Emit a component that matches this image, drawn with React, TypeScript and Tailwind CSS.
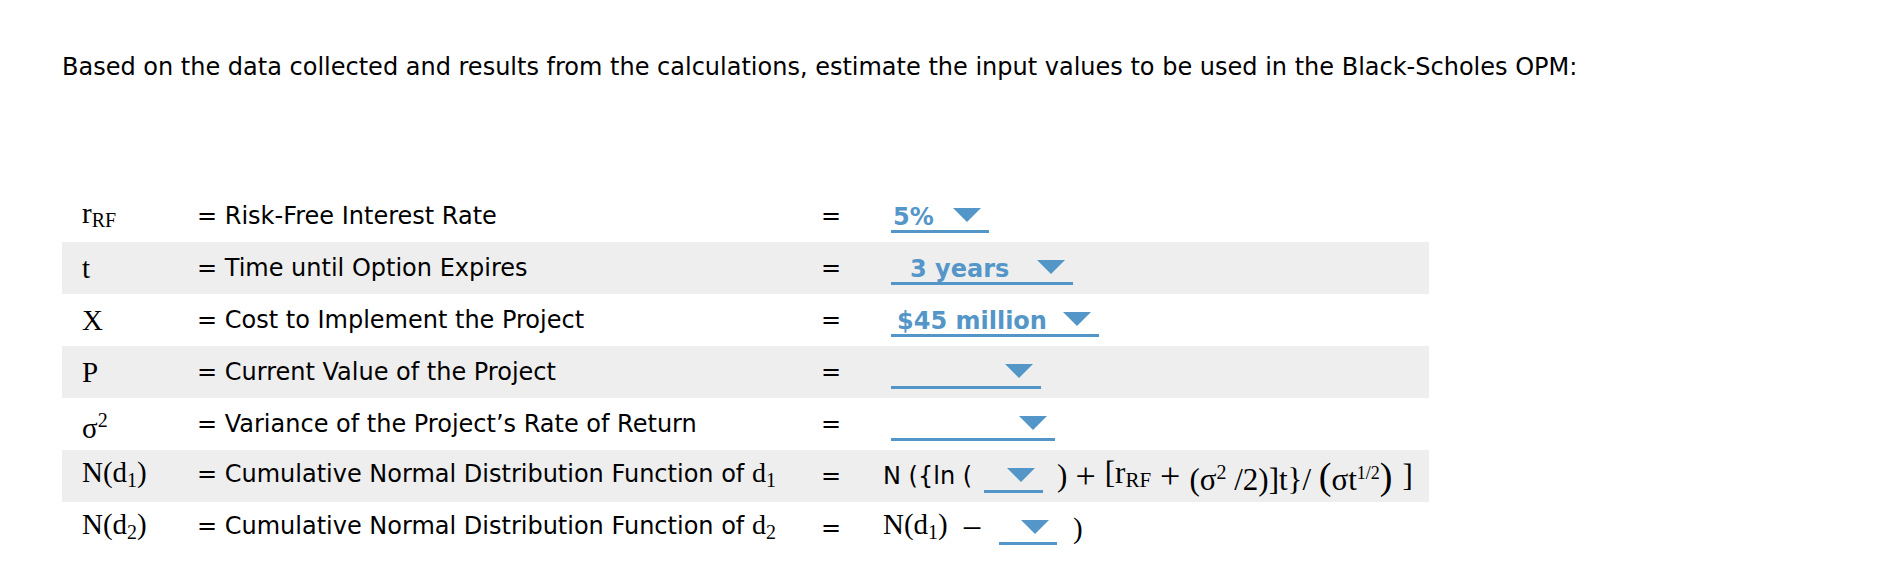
import type { ReactNode } from 'react';

const BLUE = '#5596c8';

const Triangle = () => (
  <svg width="28" height="14" viewBox="0 0 28 14" className="mt-[1px] shrink-0">
    <polygon points="0,0 28,0 14,14" fill={BLUE} />
  </svg>
);

type DropProps = { value?: string; className: string };

// blue underlined select with the caret on the right
const Dropdown = ({ value, className }: DropProps) => (
  <span
    className={`mt-[8px] flex h-[26px] shrink-0 items-start justify-between border-b-[3px] border-[#5596c8] pr-[8px] ${className}`}
  >
    <span className="text-[24px] font-bold leading-[20px] text-[#5596c8]">{value}</span>
    <Triangle />
  </span>
);

type RowProps = { gray?: boolean; name: ReactNode; desc: ReactNode; children: ReactNode };

const Row = ({ gray, name, desc, children }: RowProps) => (
  <div className={`flex h-[52px] items-center pl-[20px] ${gray ? 'bg-[#eeeeee]' : ''}`}>
    <div className="w-[115px] font-['Liberation_Serif',serif] text-[29px] leading-[30px]">{name}</div>
    <div className="w-[624px] text-[24px] leading-[28px]">{desc}</div>
    <div className="w-[62px] text-[24px] leading-[28px]">=</div>
    <div className="flex items-center">{children}</div>
  </div>
);

const Serif = ({ children }: { children: ReactNode }) => (
  <span className="font-['Liberation_Serif',serif]">{children}</span>
);

export default function App() {
  return (
    <div className="h-[582px] w-[1896px] bg-white pl-[62px] pt-[53px] font-['DejaVu_Sans',sans-serif] text-black">
      <p className="text-[24px] leading-[28px]">
        Based on the data collected and results from the calculations, estimate the input values to be used in the
        Black-Scholes OPM:
      </p>

      <div className="mt-[109px] w-[1367px]">
        <Row
          name={
            <>
              r<span className="align-[-4px] text-[20px]">RF</span>
            </>
          }
          desc="= Risk-Free Interest Rate"
        >
          <Dropdown value="5%" className="ml-[8px] w-[98px] pl-[2px]" />
        </Row>

        <Row gray name="t" desc="= Time until Option Expires">
          <Dropdown value="3 years" className="ml-[8px] w-[182px] pl-[19px]" />
        </Row>

        <Row name="X" desc="= Cost to Implement the Project">
          <Dropdown value="$45 million" className="ml-[8px] w-[208px] pl-[6px]" />
        </Row>

        <Row gray name="P" desc="= Current Value of the Project">
          <Dropdown className="ml-[8px] w-[150px]" />
        </Row>

        <Row
          name={
            <>
              σ<span className="align-[11px] text-[20px]">2</span>
            </>
          }
          desc="= Variance of the Project’s Rate of Return"
        >
          <Dropdown className="ml-[8px] w-[164px]" />
        </Row>

        <Row
          gray
          name={
            <>
              N(d<span className="align-[-5px] text-[20px]">1</span>)
            </>
          }
          desc={
            <>
              = Cumulative Normal Distribution Function of{' '}
              <Serif>
                <span className="text-[28px]">d</span>
                <span className="align-[-5px] text-[20px]">1</span>
              </Serif>
            </>
          }
        >
          <span className="whitespace-pre text-[24px] leading-[28px]">N ({'{'}ln (</span>
          <Dropdown className="ml-[12px] w-[59px] pl-[2px]" />
          <span className="ml-[14px] flex items-center font-['Liberation_Serif',serif] text-[31px] leading-[30px]">
            <span>)</span>
            <span className="ml-[8px] text-[36px] leading-[30px]">+</span>
            <span className="ml-[9px] whitespace-pre">
              [r<span className="align-[-4px] text-[21px]">RF</span>
            </span>
            <span className="mx-[9px] text-[36px] leading-[30px]">+</span>
            <span className="whitespace-pre">
              (σ<span className="align-[11px] text-[20px]">2</span> /2)]t{'}'}/{' '}
            </span>
            <span className="text-[38px] leading-[30px]">(</span>
            <span>
              σt<span className="align-[11px] text-[18px]">1/2</span>
            </span>
            <span className="text-[38px] leading-[30px]">)</span>
            <span className="ml-[10px]">]</span>
          </span>
        </Row>

        <Row
          name={
            <>
              N(d<span className="align-[-5px] text-[20px]">2</span>)
            </>
          }
          desc={
            <>
              = Cumulative Normal Distribution Function of{' '}
              <Serif>
                <span className="text-[28px]">d</span>
                <span className="align-[-5px] text-[20px]">2</span>
              </Serif>
            </>
          }
        >
          <span className="font-['Liberation_Serif',serif] text-[29px] leading-[30px]">
            N(d<span className="align-[-5px] text-[20px]">1</span>)
          </span>
          <span className="ml-[14px] font-['Liberation_Serif',serif] text-[36px] leading-[30px]">−</span>
          <Dropdown className="ml-[17px] w-[58px]" />
          <span className="ml-[16px] font-['Liberation_Serif',serif] text-[29px] leading-[30px]">)</span>
        </Row>
      </div>
    </div>
  );
}
